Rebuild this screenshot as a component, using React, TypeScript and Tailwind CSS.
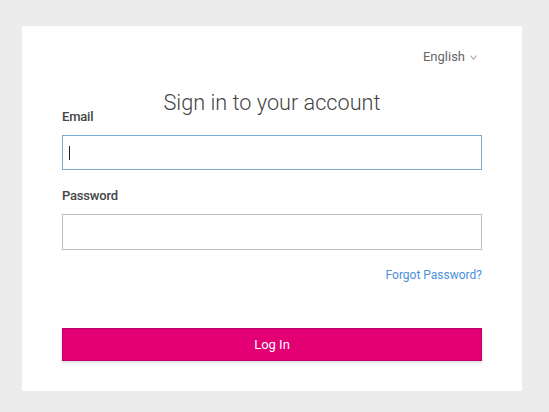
export default function App() {
  return (
    <div className="min-h-screen bg-[#ececec] pl-[22px] pt-[26px] font-['Roboto','Liberation_Sans',sans-serif]">
      <div className="flex h-[365px] w-[500px] flex-col bg-white px-10">
        <div className="flex justify-end pr-[5px] pt-[22px]">
          <button type="button" className="flex items-center gap-[5px] text-[13px] leading-[18px] text-[#666]">
            English
            <svg width="7" height="5" viewBox="0 0 7 5" className="mt-[1px]">
              <path d="M0.5 0.5 L3.5 4.5 L6.5 0.5" fill="none" stroke="#888" strokeWidth="0.9" />
            </svg>
          </button>
        </div>

        <h1 className="mt-[23px] text-center text-[21.7px] font-light leading-[28px] text-[#444]">
          Sign in to your account
        </h1>

        <label className="-mt-[9px] text-[13px] font-medium leading-[18px] tracking-[-0.2px] text-[#444]">Email</label>
        <div className="mt-[9px] flex h-[35px] items-center border border-[#78acd4] bg-white">
          <span className="ml-[6px] h-[14px] w-px bg-[#222]" />
        </div>

        <label className="mt-[17px] text-[13px] font-medium leading-[18px] tracking-[-0.2px] text-[#444]">Password</label>
        <input
          type="password"
          className="mt-[9px] h-[36px] border border-[#bdbdbd] px-2 outline-none"
        />

        <div className="mt-[16px] flex justify-end">
          <a href="#" className="text-[12px] leading-[18px] text-[#4a90d9]">
            Forgot Password?
          </a>
        </div>

        <button
          type="button"
          className="mt-[44px] h-[33px] border border-[#c0006a] bg-[#e20074] text-[13px] text-white shadow-[0_2px_3px_rgba(0,0,0,0.12)]"
        >
          Log In
        </button>
      </div>
    </div>
  );
}
